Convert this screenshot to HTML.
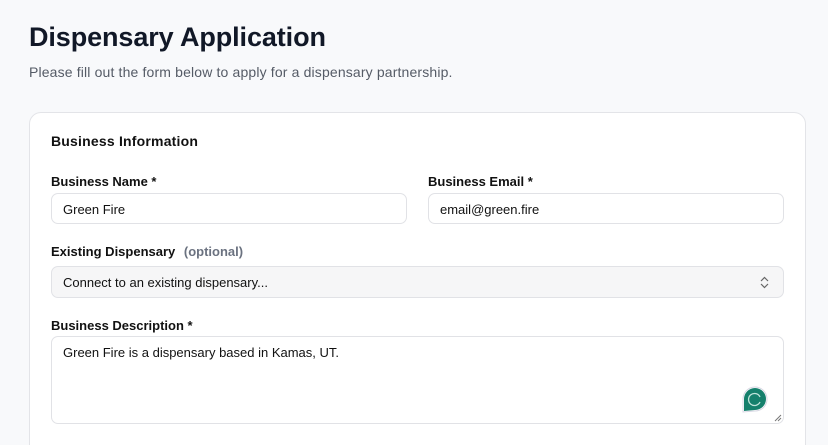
<!DOCTYPE html>
<html><head><style>
*{box-sizing:border-box;margin:0;padding:0}
html,body{width:828px;height:445px;overflow:hidden}
body{background:#f8f9fb;font-family:"Liberation Sans",Arial,sans-serif;color:#111;position:relative}
.abs{position:absolute}
h1{position:absolute;left:29px;top:22px;font-size:27px;font-weight:700;color:#111827;letter-spacing:-.1px}
.sub{left:29px;top:64px;font-size:14px;color:#555b66;letter-spacing:.15px}
.card{left:29px;top:112px;width:777px;height:345px;background:#fff;border:1px solid #e3e4e8;border-radius:12px}
.h{left:51px;top:133px;font-size:14px;font-weight:700;letter-spacing:.2px}
.lab{font-size:13px;font-weight:700}
.in{height:31px;border:1px solid #e1e2e6;border-radius:7px;background:#fff;font-size:13px;padding:8px 11px;color:#111}
.opt{color:#6b7280;font-weight:700;margin-left:5px}
</style></head><body>
<h1>Dispensary Application</h1>
<div class="abs sub">Please fill out the form below to apply for a dispensary partnership.</div>
<div class="abs card"></div>
<div class="abs h">Business Information</div>
<div class="abs lab" style="left:51px;top:174px">Business Name *</div>
<div class="abs in" style="left:51px;top:193px;width:356px">Green Fire</div>
<div class="abs lab" style="left:428px;top:174px">Business Email *</div>
<div class="abs in" style="left:428px;top:193px;width:356px">email@green.fire</div>
<div class="abs lab" style="left:51px;top:244px">Existing Dispensary <span class="opt">(optional)</span></div>
<div class="abs in" style="left:51px;top:266px;width:733px;height:32px;background:#f6f6f7">Connect to an existing dispensary...</div>
<svg class="abs" style="left:759px;top:276px" width="11" height="13" viewBox="0 0 11 13"><path d="M2 5l3.5-3.5L9 5M2 8l3.5 3.5L9 8" fill="none" stroke="#666" stroke-width="1.2"/></svg>
<div class="abs lab" style="left:51px;top:318px">Business Description *</div>
<div class="abs in" style="left:51px;top:336px;width:733px;height:88px">Green Fire is a dispensary based in Kamas, UT.</div>
<svg class="abs" style="left:741px;top:385px" width="29" height="29" viewBox="0 0 29 29"><path d="M2 27V14a12 12 0 1 1 12 12z" fill="#fff" stroke="#d8d8e4"/><path d="M3 26V14a11 11 0 1 1 11 11z" fill="#15806c"/><path d="M19 12a6 6 0 1 0 0 5" fill="none" stroke="#bfe3da" stroke-width="1.3"/></svg>
<svg class="abs" style="left:774px;top:414px" width="8" height="8"><path d="M1 7L7 1M4 7L7 4" stroke="#777"/></svg>
</body></html>
